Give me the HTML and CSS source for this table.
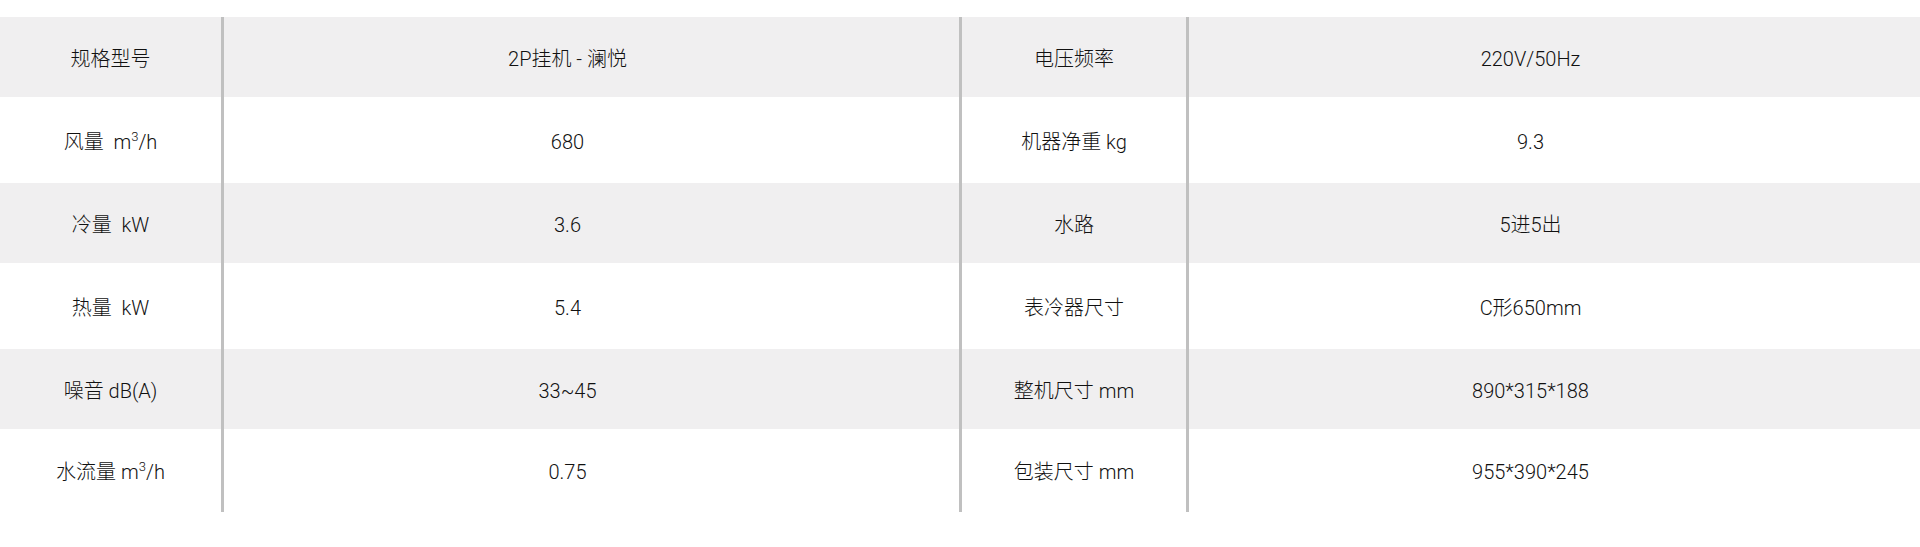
FILE: index.html
```html
<!DOCTYPE html>
<html lang="zh-CN">
<head>
<meta charset="utf-8">
<title>规格参数</title>
<link rel="stylesheet" href="styles.css">
</head>
<body>
<div class="spec">
  <div class="row">
    <div class="cell label"><span>规格型号</span></div>
    <div class="cell value"><span>2P挂机 - 澜悦</span></div>
    <div class="cell label"><span>电压频率</span></div>
    <div class="cell value"><span>220V/50Hz</span></div>
  </div>
  <div class="row">
    <div class="cell label"><span>风量&nbsp; m<sup>3</sup>/h</span></div>
    <div class="cell value"><span>680</span></div>
    <div class="cell label"><span>机器净重 kg</span></div>
    <div class="cell value"><span>9.3</span></div>
  </div>
  <div class="row">
    <div class="cell label"><span>冷量&nbsp; kW</span></div>
    <div class="cell value"><span>3.6</span></div>
    <div class="cell label"><span>水路</span></div>
    <div class="cell value"><span>5进5出</span></div>
  </div>
  <div class="row">
    <div class="cell label"><span>热量&nbsp; kW</span></div>
    <div class="cell value"><span>5.4</span></div>
    <div class="cell label"><span>表冷器尺寸</span></div>
    <div class="cell value"><span>C形650mm</span></div>
  </div>
  <div class="row">
    <div class="cell label"><span>噪音 dB(A)</span></div>
    <div class="cell value"><span>33~45</span></div>
    <div class="cell label"><span>整机尺寸 mm</span></div>
    <div class="cell value"><span>890*315*188</span></div>
  </div>
  <div class="row">
    <div class="cell label"><span>水流量 m<sup>3</sup>/h</span></div>
    <div class="cell value"><span>0.75</span></div>
    <div class="cell label"><span>包装尺寸 mm</span></div>
    <div class="cell value"><span>955*390*245</span></div>
  </div>
</div>
</body>
</html>
```

FILE: styles.css
```css
html, body {
  margin: 0;
  padding: 0;
  background: #ffffff;
}

body {
  font-family: Roboto, "Noto Sans CJK SC", sans-serif;
  font-size: 20px;
  font-weight: 300;
  color: #111111;
}

.spec {
  padding-top: 17px;
}

.row {
  display: grid;
  grid-template-columns: 221px 738px 227px 1fr;
  height: 86px;
}

.row:nth-child(odd) {
  height: 80px;
  background: #f0eff0;
}

.row:last-child {
  height: 83px;
}

.cell {
  display: flex;
  align-items: center;
  justify-content: center;
  padding-top: 3px;
  box-sizing: border-box;
  white-space: nowrap;
  line-height: 1;
}

.cell + .cell {
  border-left: 3px solid #c0c0c0;
}

.value {
  padding-right: 48px;
}

sup {
  font-size: 13px;
  line-height: 0;
  vertical-align: 8px;
}
```
